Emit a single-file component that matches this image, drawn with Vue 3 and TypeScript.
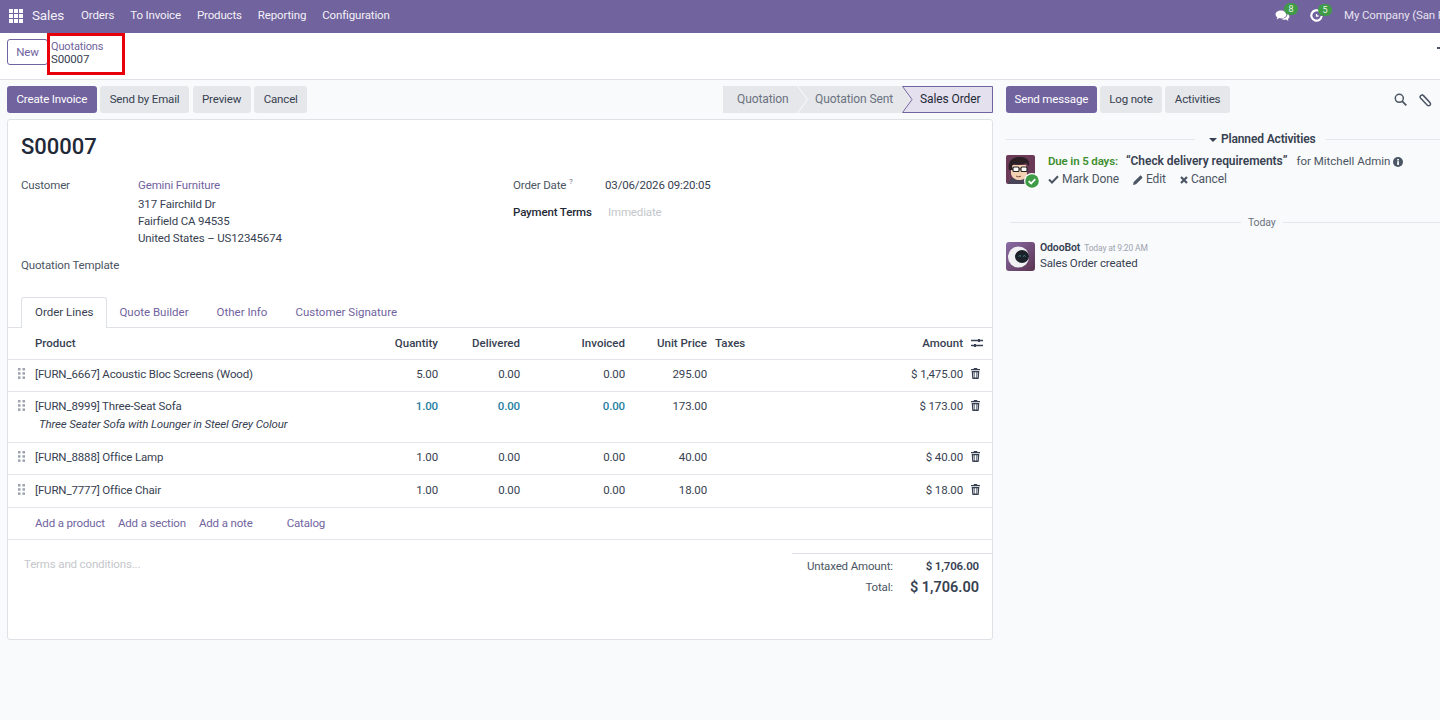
<script setup lang="ts">
interface Line { code: string; desc?: string; qty: string; del: string; inv: string; price: string; amount: string; info?: boolean }
const menus = ['Orders', 'To Invoice', 'Products', 'Reporting', 'Configuration']
const lines: Line[] = [
  { code: '[FURN_6667] Acoustic Bloc Screens (Wood)', qty: '5.00', del: '0.00', inv: '0.00', price: '295.00', amount: '$ 1,475.00' },
  { code: '[FURN_8999] Three-Seat Sofa', desc: 'Three Seater Sofa with Lounger in Steel Grey Colour', qty: '1.00', del: '0.00', inv: '0.00', price: '173.00', amount: '$ 173.00', info: true },
  { code: '[FURN_8888] Office Lamp', qty: '1.00', del: '0.00', inv: '0.00', price: '40.00', amount: '$ 40.00' },
  { code: '[FURN_7777] Office Chair', qty: '1.00', del: '0.00', inv: '0.00', price: '18.00', amount: '$ 18.00' },
]
</script>

<template>
  <div class="page">
    <header class="navbar">
      <svg class="apps" width="14" height="14" viewBox="0 0 14 14" fill="#fff">
        <rect x="0" y="0" width="4" height="4" /><rect x="5" y="0" width="4" height="4" /><rect x="10" y="0" width="4" height="4" />
        <rect x="0" y="5" width="4" height="4" /><rect x="5" y="5" width="4" height="4" /><rect x="10" y="5" width="4" height="4" />
        <rect x="0" y="10" width="4" height="4" /><rect x="5" y="10" width="4" height="4" /><rect x="10" y="10" width="4" height="4" />
      </svg>
      <span class="brand">Sales</span>
      <nav class="menu"><span v-for="m in menus" :key="m">{{ m }}</span></nav>
      <div class="systray">
        <span class="tray chat">
          <svg width="15" height="14" viewBox="0 0 15 14" fill="#fff">
            <path d="M6 1.500c3 0 5.400 1.700 5.400 3.900S9 9.300 6 9.300c-.6 0-1.100 0-1.600-.2L1.600 10.600l.8-2.300C1.200 7.600.6 6.600.6 5.400.6 3.200 3 1.500 6 1.500z" />
            <path d="M12.300 4.500c1.300.7 2.100 1.700 2.100 2.900 0 1-.6 1.900-1.500 2.500l.6 2-2.300-1.300c-.6.100-1.300.2-2 .1-1.200 0-2.200-.4-3-1 3.500.2 6.600-1.800 6.100-5.200z" />
          </svg>
          <b class="badge">8</b>
        </span>
        <span class="tray clock">
          <svg width="13" height="13" viewBox="0 0 13 13" fill="none" stroke="#fff" stroke-width="2.100">
            <path d="M9.800 2.400A5.200 5.200 0 1 0 11.700 7" />
            <path d="M6.500 5v2h2" stroke-width="1.300" />
          </svg>
          <b class="badge">5</b>
        </span>
        <span class="company">My Company (San Francisco)</span>
      </div>
    </header>

    <section class="control">
      <button class="btn outline">New</button>
      <div class="crumbs">
        <a>Quotations</a>
        <span>S00007</span>
      </div>
      <span class="tick"></span>
    </section>

    <div class="content">
      <main class="form">
        <div class="statusbar">
          <div class="actions">
            <button class="btn primary">Create Invoice</button>
            <button class="btn grey">Send by Email</button>
            <button class="btn grey">Preview</button>
            <button class="btn grey">Cancel</button>
          </div>
          <div class="stages">
            <span class="stage first">Quotation</span>
            <span class="stage second">Quotation Sent</span>
            <span class="stage current">
              <svg class="cur-shape" width="91" height="27" viewBox="0 0 91 27">
                <polygon points="0.5,0.5 90.5,0.5 90.5,26.5 0.5,26.5 10,13.5" fill="#e4e0ee" stroke="#71639e" />
              </svg>
              <span class="cur-text">Sales Order</span>
            </span>
          </div>
        </div>

        <div class="sheet">
          <h1>S00007</h1>
          <div class="groups">
            <div class="group-left">
              <div class="field">
                <label class="lab">Customer</label>
                <div class="addr">
                  <a>Gemini Furniture</a>
                  <span>317 Fairchild Dr</span>
                  <span>Fairfield CA 94535</span>
                  <span>United States – US12345674</span>
                </div>
              </div>
              <div class="template lab">Quotation Template</div>
            </div>
            <div class="group-right">
              <div class="rfield">
                <label class="lab date-lab">Order Date <sup>?</sup></label>
                <span>03/06/2026 09:20:05</span>
              </div>
              <div class="rfield terms">
                <label class="strong">Payment Terms</label>
                <span class="ph">Immediate</span>
              </div>
            </div>
          </div>

          <div class="tabs">
            <span class="tab active">Order Lines</span>
            <span class="tab">Quote Builder</span>
            <span class="tab">Other Info</span>
            <span class="tab">Customer Signature</span>
          </div>

          <table class="lines">
            <colgroup>
              <col class="c-h" /><col class="c-p" /><col class="c-q" /><col class="c-d" /><col class="c-i" /><col class="c-u" /><col class="c-t" /><col class="c-a" /><col class="c-x" />
            </colgroup>
            <thead>
              <tr>
                <th></th><th class="l">Product</th><th>Quantity</th><th>Delivered</th><th>Invoiced</th><th>Unit Price</th><th class="l">Taxes</th><th>Amount</th>
                <th class="ic">
                  <svg width="12" height="10" viewBox="0 0 12 10" fill="none" stroke="#374151" stroke-width="1.300">
                    <path d="M0 2.500h12M0 7.500h12" />
                    <rect x="7" y="1" width="2" height="3" fill="#374151" stroke="none" />
                    <rect x="3" y="6" width="2" height="3" fill="#374151" stroke="none" />
                  </svg>
                </th>
              </tr>
            </thead>
            <tbody>
              <tr v-for="l in lines" :key="l.code" class="row">
                <td class="hd">
                  <svg width="7" height="11" viewBox="0 0 7 11" fill="#9ca3af">
                    <rect x="0" y="0" width="2.500" height="2.500" /><rect x="4.500" y="0" width="2.500" height="2.500" />
                    <rect x="0" y="4.200" width="2.500" height="2.500" /><rect x="4.500" y="4.200" width="2.500" height="2.500" />
                    <rect x="0" y="8.400" width="2.500" height="2.500" /><rect x="4.500" y="8.400" width="2.500" height="2.500" />
                  </svg>
                </td>
                <td class="l">
                  {{ l.code }}
                  <div v-if="l.desc" class="desc">{{ l.desc }}</div>
                </td>
                <td :class="{ info: l.info }">{{ l.qty }}</td>
                <td :class="{ info: l.info }">{{ l.del }}</td>
                <td :class="{ info: l.info }">{{ l.inv }}</td>
                <td>{{ l.price }}</td>
                <td></td>
                <td>{{ l.amount }}</td>
                <td class="ic">
                  <svg width="9" height="11" viewBox="0 0 9 11" fill="#374151">
                    <path d="M3 0h3l.5 1H9v1.300H0V1h2.500zM.7 3h7.600l-.5 7.200c0 .5-.4.8-.8.800H2c-.4 0-.8-.3-.8-.8zM2.400 4.200v5.400h1V4.200zm1.600 0v5.400h1V4.200zm1.600 0v5.400h1V4.200z" fill-rule="evenodd" />
                  </svg>
                </td>
              </tr>
              <tr class="add">
                <td></td>
                <td colspan="8">
                  <a>Add a product</a><a>Add a section</a><a>Add a note</a><a class="catalog">Catalog</a>
                </td>
              </tr>
            </tbody>
          </table>

          <div class="foot">
            <div class="note">Terms and conditions...</div>
            <div class="totals">
              <div class="trow"><span>Untaxed Amount:</span><b>$ 1,706.00</b></div>
              <div class="trow big"><span>Total:</span><b>$ 1,706.00</b></div>
            </div>
          </div>
        </div>
      </main>

      <aside class="chatter">
        <div class="chat-top">
          <button class="btn primary">Send message</button>
          <button class="btn grey">Log note</button>
          <button class="btn grey">Activities</button>
          <svg class="search" width="13" height="13" viewBox="0 0 13 13" fill="none" stroke="#4b5563" stroke-width="1.500">
            <circle cx="5.300" cy="5.300" r="4" /><path d="M8.300 8.300l4 4" stroke-width="1.800" />
          </svg>
          <svg class="clip" width="13" height="14" viewBox="0 0 13 14" fill="none" stroke="#4b5563" stroke-width="1.500">
            <path d="M3.300 1.800 10.800 9.700c1 1.100.9 2.200.1 2.900-.8.700-1.900.6-2.800-.3L1.700 5.500C1 4.700 1 3.500 1.800 2.800c.8-.7 1.900-.7 2.700.1l6 6.400" transform="translate(0 -.3)" />
          </svg>
        </div>

        <div class="sep planned">
          <i></i>
          <span class="sep-title"><em class="caret"></em>Planned Activities</span>
          <i></i>
        </div>

        <div class="activity">
          <div class="avatar-wrap">
            <svg class="avatar" width="29" height="29" viewBox="0 0 29 29">
              <rect width="29" height="29" rx="2" fill="#6b3a57" />
              <path d="M2 29c1-5 5-7 10-7s10 2 11 7z" fill="#4a4458" />
              <path d="M5 10h15l1 9c0 4-4 6-8 6s-8-3-8-7z" fill="#f3d2b4" />
              <path d="M3 15C1 6 7 2 14 2c6 0 10 3 9 9l-3-3c-4 2-9 2-12 1l-2 2 1 4z" fill="#2a2024" />
              <rect x="7" y="12" width="6" height="4.500" rx="1" fill="#fff" stroke="#222" stroke-width="1.100" />
              <rect x="15" y="12" width="6" height="4.500" rx="1" fill="#fff" stroke="#222" stroke-width="1.100" />
              <path d="M13 14h2" stroke="#222" />
              <path d="M10 21c1.500 1 4 1 5 0" stroke="#7a4a3a" stroke-width="1" fill="none" />
            </svg>
            <svg class="ok" width="16" height="16" viewBox="0 0 16 16">
              <circle cx="8" cy="8" r="8" fill="#fff" />
              <circle cx="8" cy="8" r="6.800" fill="#3f9b45" />
              <path d="M4.700 8.100l2.400 2.400 4.200-4.400" fill="none" stroke="#fff" stroke-width="1.800" />
            </svg>
          </div>
          <div class="act-body">
            <div class="act-line">
              <b class="due">Due in 5 days:</b>
              <b class="act-name">“Check delivery requirements”</b>
              <span class="for">for Mitchell Admin</span>
              <svg width="10" height="10" viewBox="0 0 10 10"><circle cx="5" cy="5" r="5" fill="#4b5563" /><rect x="4.200" y="4.200" width="1.700" height="3.800" fill="#fff" /><rect x="4.200" y="2" width="1.700" height="1.500" fill="#fff" /></svg>
            </div>
            <div class="act-links">
              <span><svg width="11" height="9" viewBox="0 0 11 9"><path d="M1 4.500l3 3 6-6.200" fill="none" stroke="#4b5563" stroke-width="2" /></svg>Mark Done</span>
              <span><svg width="10" height="10" viewBox="0 0 10 10" fill="#4b5563"><path d="M0 10l.7-3L6.800.900c.4-.4 1-.4 1.400 0l.9.900c.4.400.4 1 0 1.400L3 9.300z" /></svg>Edit</span>
              <span><svg width="8" height="8" viewBox="0 0 8 8"><path d="M1 1l6 6M7 1L1 7" stroke="#4b5563" stroke-width="2.200" /></svg>Cancel</span>
            </div>
          </div>
        </div>

        <div class="sep today"><i></i><span>Today</span><i></i></div>

        <div class="message">
          <svg width="29" height="29" viewBox="0 0 29 29">
            <defs>
              <linearGradient id="bot" x1="0" y1="0" x2="1" y2="1"><stop offset="0" stop-color="#8a6ca6" /><stop offset="1" stop-color="#5a3350" /></linearGradient>
            </defs>
            <rect width="29" height="29" rx="3" fill="url(#bot)" />
            <circle cx="12.500" cy="15" r="10.500" fill="#f1f1f3" />
            <ellipse cx="16" cy="14.500" rx="7" ry="6.500" fill="#1b2029" />
            <path d="M12.500 14.500l1.300-1 1.300 1M17 14.500l1.300-1 1.300 1" stroke="#4fa9a8" stroke-width=".8" fill="none" />
          </svg>
          <div class="msg-body">
            <div class="msg-head"><b>OdooBot</b><small>Today at 9:20 AM</small></div>
            <div class="msg-text">Sales Order created</div>
          </div>
        </div>
      </aside>
    </div>
  </div>
</template>

<style>
html, body { margin: 0; background: #f9fafb; }
</style>

<style scoped>
.page {
  width: 1440px;
  height: 720px;
  overflow: hidden;
  font-family: Roboto, "Noto Sans", sans-serif;
  font-size: 11.500px;
  letter-spacing: -0.15px;
  line-height: 17px;
  color: #374151;
  background: #f9fafb;
}
a { color: #71639e; }
.navbar {
  height: 33px;
  box-sizing: border-box;
  padding: 0 0 2px 9px;
  background: #71639e;
  color: #f3f1f7;
  display: flex;
  align-items: center;
  white-space: nowrap;
}
.brand { font-size: 13.500px; margin-left: 9px; }
.menu { display: flex; gap: 16px; margin-left: 17px; }
.systray { margin-left: auto; display: flex; align-items: center; width: 165px; flex: none; height: 31px; overflow: hidden; }
.tray { position: relative; display: flex; align-items: center; flex: none; }
.chat { width: 35px; }
.clock { width: 34px; }
.badge {
  position: absolute;
  top: -6px;
  left: 9px;
  width: 14px;
  height: 12px;
  line-height: 12px;
  border-radius: 7px;
  background: #3f9b45;
  color: #e9f5ea;
  font-size: 9px;
  font-weight: 400;
  text-align: center;
}
.clock .badge { left: 8px; top: -5px; }
.company { color: #e6e2ef; flex: none; }

.control {
  position: relative;
  height: 47px;
  box-sizing: border-box;
  background: #fff;
  border-bottom: 1px solid #dee2e6;
  display: flex;
  align-items: flex-start;
  padding: 6px 0 0 7px;
}
.btn {
  font: inherit;
  letter-spacing: inherit;
  height: 27px;
  padding: 0 9.500px;
  border: 0;
  border-radius: 3px;
  white-space: nowrap;
  display: inline-flex;
  align-items: center;
  color: #374151;
  background: #e5e7ea;
}
.outline { background: #fff; border: 1px solid #71639e; color: #71639e; height: 26px; width: 41px; justify-content: center; padding: 0; }
.primary { background: #71639e; color: #fff; }
.crumbs {
  margin: -6px 0 0 -1px;
  position: relative;
  box-sizing: border-box;
  width: 78px;
  height: 42px;
  border: 3px solid #e8000b;
  padding: 4.500px 0 0 1px;
  display: flex;
  flex-direction: column;
  line-height: 12px;
  font-size: 11px;
  background: #fff;
}
.crumbs span { font-size: 11.500px; }
.tick { position: absolute; right: 0; top: 14px; width: 3px; height: 2px; background: #4b5563; }

.content { display: flex; }
.form { width: 993px; flex: none; padding: 6px 0 0 7px; box-sizing: border-box; }
.statusbar { display: flex; justify-content: space-between; height: 27px; }
.actions { display: flex; gap: 3.500px; }
.stages { display: flex; height: 27px; font-size: 12px; letter-spacing: -0.1px; }
.stage {
  display: flex;
  align-items: center;
  height: 27px;
  box-sizing: border-box;
  background: #e5e7ea;
  color: #6b7280;
  flex: none;
}
.first { width: 84px; padding-left: 14px; clip-path: polygon(0 0, 74px 0, 84px 50%, 74px 100%, 0 100%); }
.second { width: 114px; margin-left: -9px; padding-left: 17px; clip-path: polygon(0 0, 103px 0, 113px 50%, 103px 100%, 0 100%, 10px 50%); }
.current {
  width: 91px;
  margin-left: -10px;
  padding-left: 18px;
  background: transparent;
  color: #1f2937;
  position: relative;
}
.cur-shape { position: absolute; left: 0; top: 0; }
.cur-text { position: relative; }

.sheet {
  margin-top: 6px;
  box-sizing: border-box;
  width: 986px;
  height: 521px;
  background: #fff;
  border: 1px solid #dee2e6;
  border-radius: 3px;
}
h1 { margin: 0; font-size: 22px; font-weight: 500; letter-spacing: 0; line-height: 30px; padding: 12px 0 0 13px; color: #1f2937; }
.groups { display: flex; padding-left: 13px; margin-top: 15px; height: 120px; }
.group-left { width: 492px; flex: none; }
.field { display: flex; }
.lab { color: #4b5563; }
.field .lab { width: 117px; flex: none; }
.addr { display: flex; flex-direction: column; line-height: 17px; }
.addr a { margin-bottom: 2px; }
.template { margin-top: 10px; }
.rfield { display: flex; }
.date-lab { width: 92px; }
sup { font-size: 8px; line-height: 0; color: #6b7280; }
.terms { margin-top: 10px; }
.strong { font-weight: 500; width: 95px; color: #1f2937; }
.ph { color: #c4c7cc; }
.tabs {
  display: flex;
  padding-left: 13px;
  height: 31px;
  box-sizing: border-box;
  border-bottom: 1px solid #dee2e6;
  letter-spacing: 0;
}
.tab { color: #71639e; padding: 7px 13px 0; height: 30px; box-sizing: border-box; }
.tab:nth-child(2) { margin-left: -1px; }
.tab:nth-child(3) { margin-left: 2px; }
.tab:last-child { margin-left: 2px; }
.active {
  color: #374151;
  background: #fff;
  border: 1px solid #dee2e6;
  border-bottom: 0;
  padding-top: 6px;
  height: 31px;
  border-radius: 3px 3px 0 0;
}
.lines { width: 985px; border-collapse: collapse; table-layout: fixed; }
.c-h { width: 27px; } .c-p { width: 325px; } .c-q { width: 86px; } .c-d { width: 82px; } .c-i { width: 105px; }
.c-u { width: 82px; } .c-t { width: 85px; } .c-a { width: 171px; } .c-x { width: 22px; }
th, td { text-align: right; padding: 0 8px; border-bottom: 1px solid #e3e6ea; vertical-align: top; }
th { height: 29px; font-weight: 500; letter-spacing: 0; vertical-align: middle; color: #374151; }
td { padding-top: 6px; height: 25px; }
.lines th.l, .lines td.l { text-align: left; padding-left: 0; }
.lines th.ic, .lines td.ic { padding: 6px 0 0 0; text-align: left; }
.lines th.ic { padding-top: 2px; }
.lines .row:nth-last-child(2) td { padding-top: 7px; }
td svg { display: block; margin-top: 2px; }
td.hd { padding-left: 10px; text-align: left; color: #9ca3af; }
.desc { font-style: italic; margin-top: 1px; padding-left: 4px; line-height: 17px; padding-bottom: 9px; }
.info { color: #1f7ea1; font-weight: 500; }
.add td { text-align: left; padding-left: 0; height: 24px; padding-top: 7px; }
.add a { margin-right: 13px; }
.add .catalog { margin-left: 21px; }
.foot { display: flex; justify-content: space-between; }
.note { color: #c4c7cc; padding: 16px 0 0 16px; }
.totals { width: 200px; margin-top: 13px; border-top: 1px solid #dee2e6; padding: 2px 13px 0 0; box-sizing: border-box; }
.trow { display: flex; justify-content: space-between; align-items: center; height: 20px; }
.trow span { width: 101px; text-align: right; color: #4b5563; }
.trow b { font-weight: 600; font-size: 11.500px; color: #374151; }
.big { height: 23px; }
.big b { font-size: 14.500px; letter-spacing: 0; }

.chatter { flex: 1; min-width: 0; padding: 6px 0 0 13px; }
.chat-top { display: flex; align-items: center; gap: 3px; height: 27px; padding-right: 8px; }
.chat-top .primary { padding: 0 8.500px; }
.search { margin-left: auto; }
.clip { margin-left: 9px; }
.sep { display: flex; align-items: center; }
.sep i { flex: 1; height: 1px; background: #e3e6ea; }
.planned { margin-top: 18px; height: 17px; }
.sep-title { font-weight: 600; padding: 0 11px 0 14px; font-size: 12px; display: flex; align-items: center; color: #374151; }
.caret { width: 0; height: 0; border: 4px solid transparent; border-top-color: #374151; border-bottom: 0; margin-right: 4px; }
.planned i:first-child { flex: none; width: 189px; }
.activity { display: flex; margin-top: 7px; }
.avatar-wrap { position: relative; width: 29px; height: 29px; flex: none; }
.avatar { display: block; }
.ok { position: absolute; right: -5px; bottom: -5px; }
.act-body { margin-left: 13px; margin-top: -2px; }
.act-line { display: flex; align-items: center; white-space: nowrap; height: 17px; }
.due { color: #3f8f2f; font-weight: 600; margin-right: 8px; }
.act-name { font-weight: 600; font-size: 12px; letter-spacing: -0.05px; margin-right: 9px; }
.for { color: #4b5563; letter-spacing: 0; margin-right: 3px; }
.act-links { display: flex; gap: 14px; margin-top: 1px; color: #4b5563; font-size: 12px; letter-spacing: -0.1px; }
.act-links span { display: flex; align-items: center; gap: 3px; }
.today { margin-top: 26px; color: #6b7280; font-size: 10.500px; margin-left: 4px; }
.today span { padding: 0 7px; }
.today i:first-child { flex: none; width: 231px; }
.message { display: flex; margin-top: 11px; }
.msg-body { margin-left: 5px; margin-top: -2px; }
.msg-head { display: flex; align-items: baseline; gap: 4px; height: 15px; line-height: 15px; }
.msg-head b { font-weight: 600; font-size: 10.500px; }
.msg-head small { font-size: 8.500px; color: #9ca3af; }
</style>
